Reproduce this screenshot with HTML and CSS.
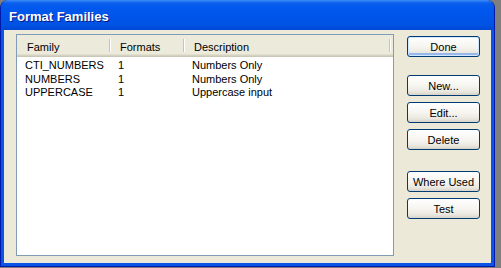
FILE: index.html
```html
<!DOCTYPE html>
<html lang="en">
<head>
  <meta charset="UTF-8" />
  <title>Format Families</title>
  <link rel="stylesheet" href="styles.css">
</head>
<body>

  <div class="window">
    <div class="titlebar">
      <span class="title">Format Families</span>
    </div>

    <div class="client">
      <div class="listview">
        <div class="lv-header">
          <div class="col col-family">Family</div>
          <div class="col col-formats">Formats</div>
          <div class="col col-desc">Description</div>
        </div>
        <div class="lv-body">
          <div class="lv-row">
            <div class="cell col-family">CTI_NUMBERS</div>
            <div class="cell col-formats">1</div>
            <div class="cell col-desc">Numbers Only</div>
          </div>
          <div class="lv-row">
            <div class="cell col-family">NUMBERS</div>
            <div class="cell col-formats">1</div>
            <div class="cell col-desc">Numbers Only</div>
          </div>
          <div class="lv-row">
            <div class="cell col-family">UPPERCASE</div>
            <div class="cell col-formats">1</div>
            <div class="cell col-desc">Uppercase input</div>
          </div>
        </div>
      </div>

      <div class="buttons">
        <button class="btn btn-default">Done</button>
        <button class="btn group-start">New...</button>
        <button class="btn">Edit...</button>
        <button class="btn">Delete</button>
        <button class="btn group-start-wide">Where Used</button>
        <button class="btn">Test</button>
      </div>
    </div>
  </div>

</body>
</html>
```

FILE: styles.css
```css
:root {
  --frame-blue: #0a55e6;
  --frame-dark: #0019a8;
  --face: #ece9d8;
  --lv-border: #7f9db9;
  --header-bg: #ebeadb;
  --btn-border: #003c74;
  --font-stack: "Liberation Sans", Arial, sans-serif;
}

* {
  margin: 0;
  padding: 0;
  box-sizing: border-box;
}

body {
  background-color: #7f7f7f;
  font-family: var(--font-stack);
  font-size: 11px;
  color: #000;
}

.window {
  width: 495px;
  height: 267px;
  display: flex;
  flex-direction: column;
  background-color: var(--frame-blue);
  border: 1px solid var(--frame-dark);
  border-top: none;
  border-radius: 8px 8px 0 0;
  overflow: hidden;
}

.titlebar {
  height: 30px;
  display: flex;
  align-items: center;
  padding: 2px 0 0 8px;
  background: linear-gradient(#3d8ef8 0, #0b5eee 3px, #0058ee 8px, #0056ea 50%, #0052e2 85%, #0047d4 100%);
}

.title {
  color: #fff;
  font-weight: bold;
  font-size: 13px;
  text-shadow: 1px 1px 0 #0a1883;
}

.client {
  flex: 1;
  display: flex;
  align-items: flex-start;
  margin: 0 3px 3px;
  background-color: var(--face);
}

/* list view */

.listview {
  width: 378px;
  height: 222px;
  margin: 4px 0 0 12px;
  background-color: #fff;
  border: 1px solid var(--lv-border);
}

.lv-header {
  display: flex;
  height: 22px;
  background-color: var(--header-bg);
  box-shadow: inset 0 -1px #cbc7b8, inset 0 -2px #d6d2c2, inset 0 -3px #e2decd;
}

.lv-header .col {
  position: relative;
  padding: 6px 0 0 10px;
}

.lv-header .col::after {
  content: "";
  position: absolute;
  top: 4px;
  bottom: 5px;
  right: 0;
  width: 1px;
  background-color: #c7c5b2;
  box-shadow: 1px 0 #fff;
}

.col-family { width: 93px; }
.col-formats { width: 74px; }
.col-desc { width: 206px; }

.lv-body {
  padding-top: 2px;
}

.lv-row {
  display: flex;
  height: 13.5px;
  line-height: 13px;
}

.lv-row .cell {
  padding-left: 8px;
  white-space: nowrap;
}

/* buttons */

.buttons {
  display: flex;
  flex-direction: column;
  gap: 6px;
  margin: 6px 0 0 13px;
}

.btn {
  width: 73px;
  height: 21px;
  font-family: var(--font-stack);
  font-size: 11px;
  color: #000;
  border: 1px solid var(--btn-border);
  border-radius: 3px;
  background: linear-gradient(#fff 0, #f6f5f0 50%, #ebe9e1 80%, #d8d3c8 100%);
}

.btn-default {
  box-shadow: inset 0 0 0 1px #cee7ff, inset 0 -2px 0 1px #98b8ea;
}

.group-start { margin-top: 12px; }
.group-start-wide { margin-top: 15px; }
```
